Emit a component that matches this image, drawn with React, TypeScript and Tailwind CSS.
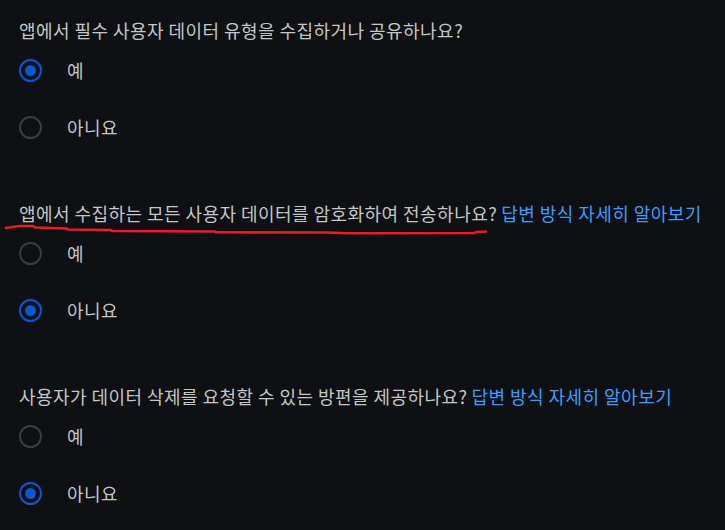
const font = { fontFamily: '"Malgun Gothic", "Noto Sans CJK KR", Roboto, sans-serif' }

interface Question {
  text: string
  link?: boolean
  answer: 'yes' | 'no'
}

const questions: Question[] = [
  { text: '앱에서 필수 사용자 데이터 유형을 수집하거나 공유하나요?', answer: 'yes' },
  { text: '앱에서 수집하는 모든 사용자 데이터를 암호화하여 전송하나요?', link: true, answer: 'no' },
  { text: '사용자가 데이터 삭제를 요청할 수 있는 방편을 제공하나요?', link: true, answer: 'no' },
]

function Radio({ checked }: { checked: boolean }) {
  return (
    <span
      className={`flex items-center justify-center w-[23px] h-[23px] rounded-full border-2 ${
        checked ? 'border-[#0b57d0]' : 'border-[#3a3c40]'
      }`}
    >
      {checked && <span className="w-[11px] h-[11px] rounded-full bg-[#0b57d0]" />}
    </span>
  )
}

function Option({ label, checked }: { label: string; checked: boolean }) {
  return (
    <div className="flex items-center h-[48px] pl-[19px]">
      <Radio checked={checked} />
      <span className="ml-[25px] text-[18px] tracking-[0.4px] text-[#c4c7c5]">{label}</span>
    </div>
  )
}

export default function App() {
  return (
    <div
      className="relative w-[725px] h-[530px] overflow-hidden bg-[#0f1013] pt-[18px]"
      style={font}
    >
      <div className="flex flex-col gap-[50px]">
        {questions.map((q, i) => (
          <section key={i} className="flex flex-col">
            <p className="h-[24px] leading-[24px] pl-[19px] text-[18px] tracking-[0.45px] text-[#c4c7c5] whitespace-nowrap">
              {q.text}
              {q.link && (
                <a className="ml-[4px] text-[#3b9dff]" href="#">
                  답변 방식 자세히 알아보기
                </a>
              )}
            </p>
            <div className="flex flex-col gap-[9px] mt-[4px]">
              <Option label="예" checked={q.answer === 'yes'} />
              <Option label="아니요" checked={q.answer === 'no'} />
            </div>
          </section>
        ))}
      </div>

      {/* red hand-drawn underline */}
      <svg className="absolute left-0 top-0 pointer-events-none" width="725" height="530">
        <path
          d="M6 228 L20 226 L33 226 L35 227.5 L67 228.5 L68 229.5 L111 230 L112 231 L215 231.5 L216 232.3 L326 232.5 L349 233.3 L474 233 L478 232 L486 231.5"
          fill="none"
          stroke="#ea1c24"
          strokeWidth="2.6"
          strokeLinecap="round"
          strokeLinejoin="round"
        />
      </svg>
    </div>
  )
}
